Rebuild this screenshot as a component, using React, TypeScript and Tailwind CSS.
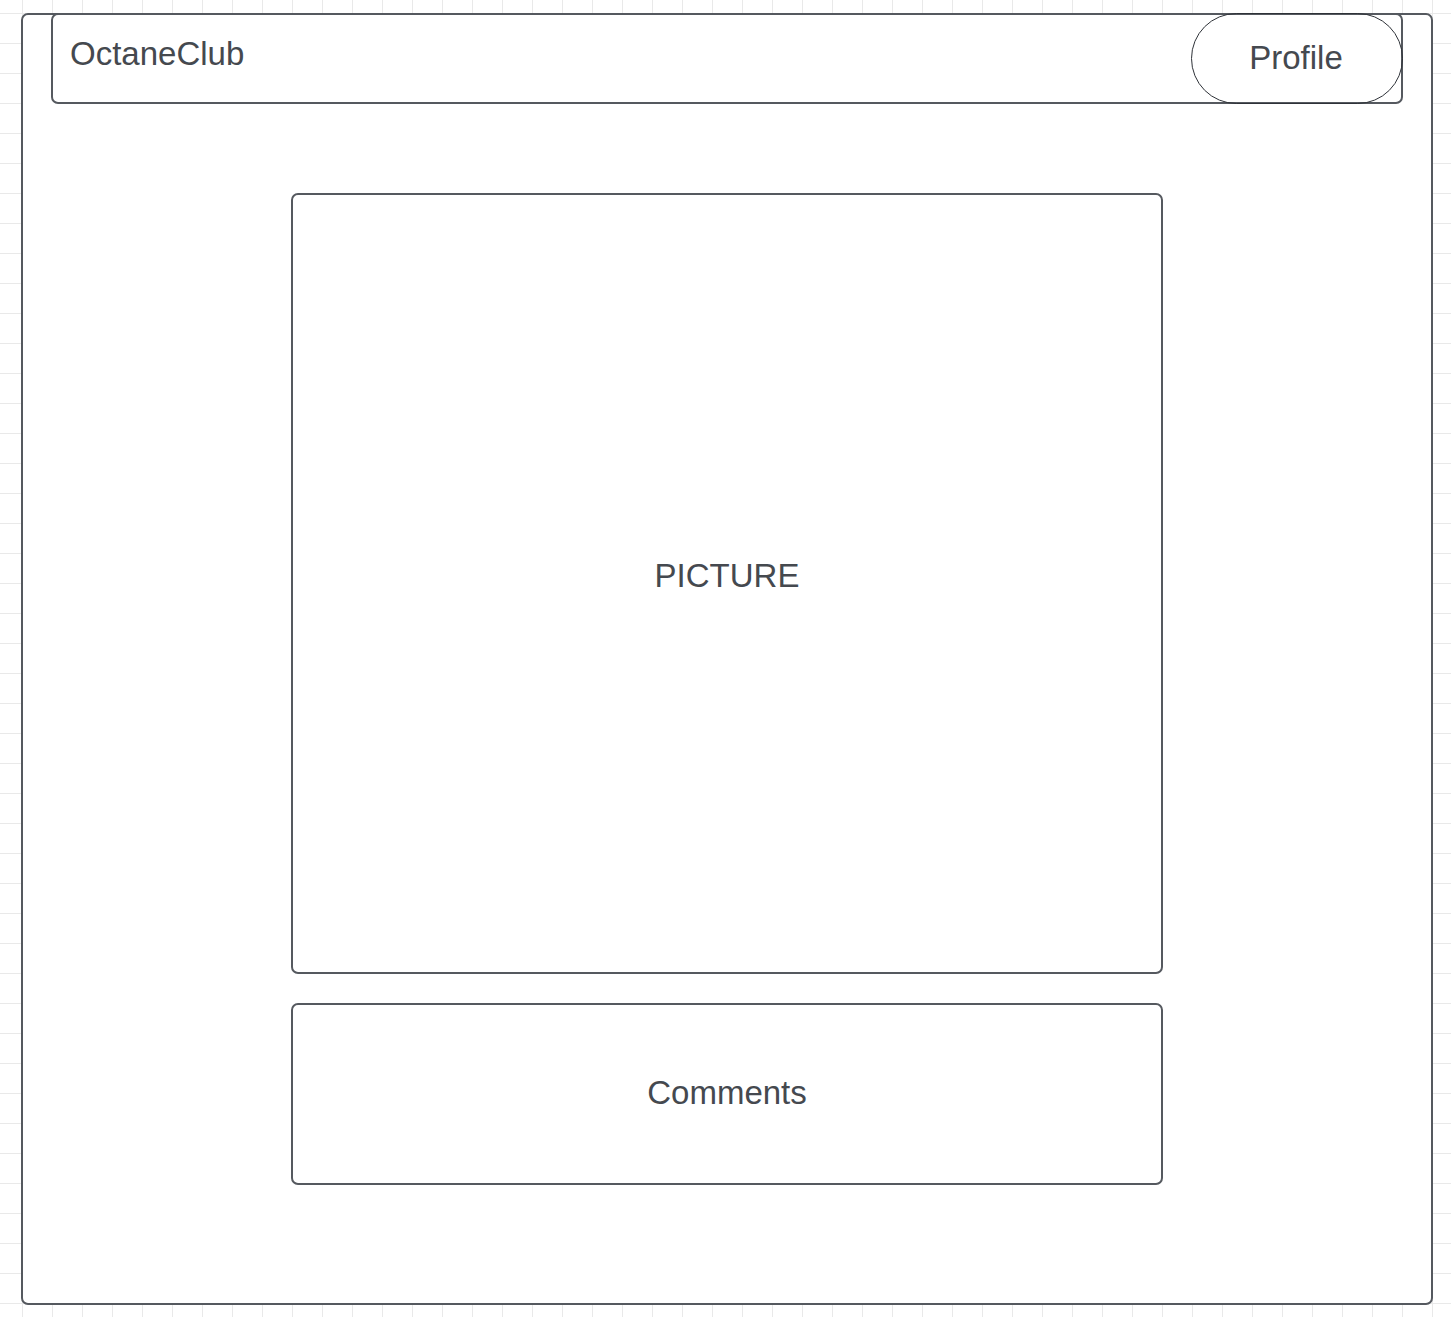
import React from 'react';

const font = { fontFamily: '"Liberation Sans", Arial, sans-serif' };

const App = () => {
  return (
    <div
      className="w-full h-[1317px] overflow-hidden bg-white bg-[linear-gradient(to_right,#e9e9e9_1px,transparent_1px),linear-gradient(to_bottom,#e9e9e9_1px,transparent_1px)] bg-[size:30px_30px] bg-[position:22px_13px] pt-[13px] pl-[21px]"
      style={font}
    >
      <div className="w-[1412px] h-[1292px] bg-white border-2 border-[#55595f] rounded-[7px] flex flex-col items-center text-[#45494f] text-[33px]">
        {/* top bar */}
        <header className="self-start ml-[28px] -mt-[2px] w-[1352px] h-[91px] border-2 border-[#55595f] rounded-[7px] flex items-stretch justify-between bg-white">
          <a href="/" className="pl-[17px] pt-[22px] leading-none no-underline">
            OctaneClub
          </a>
          <button className="-my-[2px] -mr-[2px] w-[212px] border border-[#2e3238] rounded-full flex items-center justify-center pb-[2px] pr-[2px] leading-none">
            Profile
          </button>
        </header>

        {/* post */}
        <div className="mt-[89px] w-[872px] h-[781px] border-2 border-[#55595f] rounded-[7px] flex items-center justify-center pb-[16px] leading-none">
          PICTURE
        </div>

        <div className="mt-[29px] w-[872px] h-[182px] border-2 border-[#55595f] rounded-[7px] flex items-center justify-center pb-[4px] leading-none">
          Comments
        </div>
      </div>
    </div>
  );
};

export default App;
